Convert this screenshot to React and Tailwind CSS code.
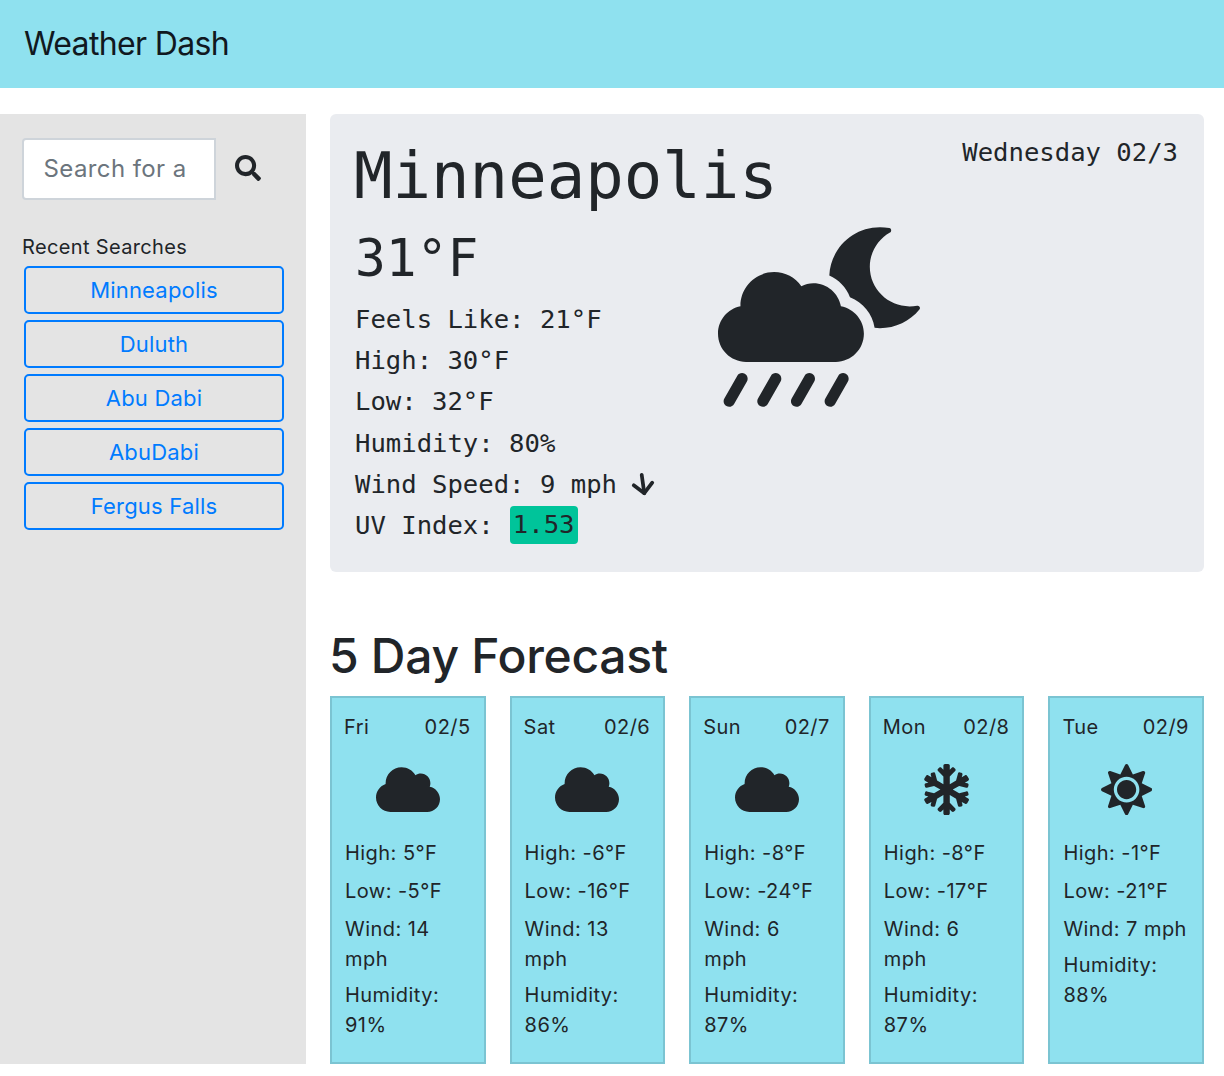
import React from 'react';
import { FaCloud, FaCloudMoonRain, FaSearch, FaSnowflake, FaSun } from 'react-icons/fa';
import { ArrowDown } from 'lucide-react';

const recent = ['Minneapolis', 'Duluth', 'Abu Dabi', 'AbuDabi', 'Fergus Falls'];

const forecast = [
  { day: 'Fri', date: '02/5', Icon: FaCloud, iconSize: 'w-[64px] h-[51.2px]', high: '5', low: '-5', wind: 'Wind: 14\nmph', humidity: '91' },
  { day: 'Sat', date: '02/6', Icon: FaCloud, iconSize: 'w-[64px] h-[51.2px]', high: '-6', low: '-16', wind: 'Wind: 13\nmph', humidity: '86' },
  { day: 'Sun', date: '02/7', Icon: FaCloud, iconSize: 'w-[64px] h-[51.2px]', high: '-8', low: '-24', wind: 'Wind: 6\nmph', humidity: '87' },
  { day: 'Mon', date: '02/8', Icon: FaSnowflake, iconSize: 'w-[51.2px] h-[51.2px]', high: '-8', low: '-17', wind: 'Wind: 6\nmph', humidity: '87' },
  { day: 'Tue', date: '02/9', Icon: FaSun, iconSize: 'w-[51.2px] h-[51.2px]', high: '-1', low: '-21', wind: 'Wind: 7 mph', humidity: '88' },
];

function ForecastCard({ day, date, Icon, iconSize, high, low, wind, humidity })
{
  return (
    <div className="flex-1 min-w-0 h-[368px] bg-[#8fe1ef] border-2 border-[#7bc4d2] px-3 text-[#212529] text-[20px] leading-[30px] tracking-[0.45px]">
      <div className="flex justify-between pt-[14px] pr-[1px]">
        <span>{day}</span>
        <span>{date}</span>
      </div>
      <div className="flex justify-center pt-[22px] pb-[22.8px]">
        <Icon className={iconSize} />
      </div>
      <div className="ml-[1px]">
        <p className="mb-2">High: {high}°F</p>
        <p className="mb-2">Low: {low}°F</p>
        <p className="mb-[6px] whitespace-pre-line">{wind}</p>
        <p>Humidity: {humidity}%</p>
      </div>
    </div>
  );
}

export default function App()
{
  return (
    <div className="font-['Inter',sans-serif] text-[#212529] bg-white min-h-[1076px]">
      <header className="h-[88px] bg-[#8fe1ef] flex items-center px-6 text-[32px] tracking-[-0.65px] text-[#101820]">
        Weather Dash
      </header>

      <div className="flex mt-[26px] h-[950px]">
        <aside className="w-[306px] shrink-0 bg-[#e4e4e4] pl-[22px] pr-[22px] pt-6">
          <div className="flex items-center">
            <input
              placeholder="Search for a city"
              className="w-[194px] h-[62px] bg-white border-2 border-[#ced4da] rounded-l-[4px] pl-[19.5px] pr-[24px] pb-[2px] text-[24px] tracking-[0.4px] placeholder:text-[#6c757d] outline-none"
            />
            <FaSearch className="ml-[19px] mb-[2px] w-[26px] h-[26px] text-[#212529]" />
          </div>
          <div className="mt-[35px] text-[20px] leading-[24px] tracking-[0.35px]">Recent Searches</div>
          <div className="flex flex-col gap-[6px] ml-[2px] mt-[7px]">
            {recent.map((city) => (
              <button key={city} className="h-[48px] w-[260px] border-2 border-[#007bff] rounded-[5px] text-[#007bff] text-[22px] tracking-[0.2px] bg-transparent">
                {city}
              </button>
            ))}
          </div>
        </aside>

        <main className="flex-1 ml-6 mr-5 min-w-0">
          <section className="relative h-[458px] bg-[#eaecf0] rounded-[6px] px-[25px] pt-[26px] font-['DejaVu_Sans_Mono',monospace]">
            <div className="absolute top-[22px] right-[26px] text-[25.6px] leading-[32px]">Wednesday 02/3</div>
            <h1 className="text-[64px] leading-[72px] -ml-[1px]">Minneapolis</h1>
            <div className="flex">
              <div className="w-[363px] shrink-0 pt-[17px]">
                <div className="text-[51.2px] leading-[58px] mb-[12px]">31°F</div>
                <p className="text-[25.6px] leading-[41.2px]">Feels Like: 21°F</p>
                <p className="text-[25.6px] leading-[41.2px]">High: 30°F</p>
                <p className="text-[25.6px] leading-[41.2px]">Low: 32°F</p>
                <p className="text-[25.6px] leading-[41.2px]">Humidity: 80%</p>
                <p className="text-[25.6px] leading-[41.2px] h-[41.2px] flex items-center">
                  Wind Speed: 9 mph
                  <ArrowDown className="ml-[10px] w-[32px] h-[32px] -rotate-[8deg]" strokeWidth={2.8} />
                </p>
                <p className="text-[25.6px] leading-[41.2px] h-[41.2px] flex items-center">
                  UV Index:
                  <span className="ml-[16px] mb-[2px] bg-[#00c49a] rounded-[4px] h-[38px] w-[68px] flex items-center justify-center">1.53</span>
                </p>
              </div>
              <FaCloudMoonRain className="w-[202px] h-[180px] mt-[15px] text-[#212529]" />
            </div>
          </section>

          <h2 className="mt-[54px] -ml-[1px] text-[48px] leading-[60px] font-medium tracking-[-0.3px]">5 Day Forecast</h2>
          <div className="flex gap-6 mt-[10px]">
            {forecast.map((f) => (
              <ForecastCard key={f.day} {...f} />
            ))}
          </div>
        </main>
      </div>
    </div>
  );
}
